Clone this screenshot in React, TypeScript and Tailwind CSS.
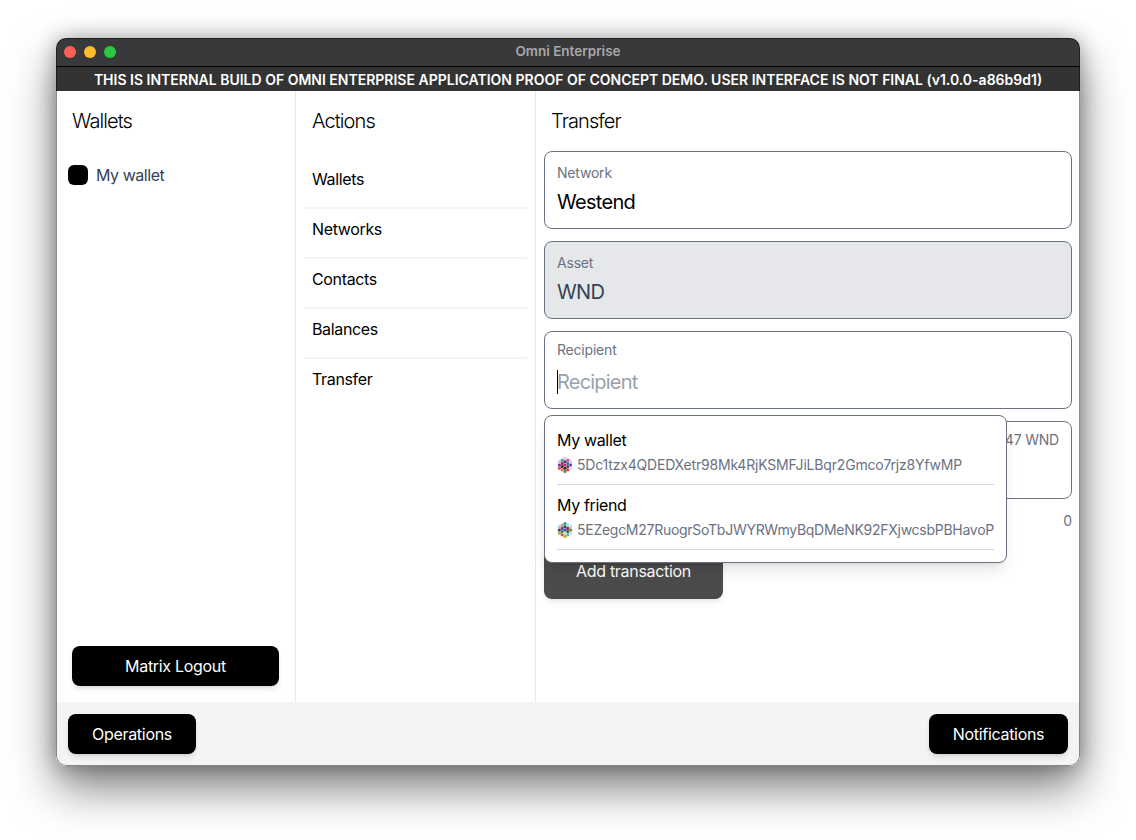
import React from "react";

const columns: number[][] = [
  [4.8, 8, 11.2],
  [3.2, 6.4, 9.6, 12.8],
  [1.6, 4.8, 8, 11.2, 14.4],
  [3.2, 6.4, 9.6, 12.8],
  [4.8, 8, 11.2],
];
const xs = [2.4, 5.2, 8, 10.8, 13.6];
const dots: [number, number][] = columns.flatMap((col, i) => col.map((y) => [xs[i], y] as [number, number]));

function Identicon({ colors }: { colors: string[] }) {
  return (
    <svg width="16" height="16" viewBox="0 0 16 16" className="shrink-0">
      <circle cx="8" cy="8" r="8" fill="#f3eff3" />
      {dots.map(([x, y], i) => (
        <circle key={i} cx={x} cy={y} r="1.55" fill={colors[i]} />
      ))}
    </svg>
  );
}

const c1 = ["#e9b3d8", "#7a2f7a", "#d94a4a", "#2aa0a0", "#a02a6a", "#30303a", "#e07a30", "#e8c0e0", "#40307a", "#c0206a", "#25252f", "#2aa05a", "#e040a0", "#1e8a8a", "#8a2f4f", "#d93a3a", "#e8c0e0", "#5a3fc0", "#e8d0e8"];
const c2 = ["#8fd0c0", "#23405f", "#a8b22b", "#d0a060", "#7a3a8a", "#2a8f5f", "#c0508a", "#20a0b0", "#3a3a50", "#4a3fb0", "#e0e0a0", "#e0a030", "#a0e0e0", "#7a2f50", "#3a6a30", "#30c0c0", "#c0d0e0", "#5a8a30", "#e8d0e8"];

function Field({ label, children, className = "" }: { label: React.ReactNode; children?: React.ReactNode; className?: string }) {
  return (
    <div className={`h-[78px] rounded-lg border border-gray-500 px-3 ${className}`}>
      {label}
      {children}
    </div>
  );
}

function Btn({ children, className = "" }: { children: React.ReactNode; className?: string }) {
  return (
    <button className={`rounded-lg bg-black text-white text-base tracking-[-0.3px] shadow-md ${className}`}>{children}</button>
  );
}

export default function App() {
  return (
    <div className="w-[1136px] h-[840px] bg-white overflow-hidden pl-[56px] pt-[38px] font-['Inter','Liberation_Sans',sans-serif]">
      <div className="relative w-[1024px] h-[728px] rounded-[10px] overflow-hidden flex flex-col bg-white shadow-[0_22px_45px_rgba(0,0,0,0.5),0_0_20px_rgba(0,0,0,0.3)]">
        <div className="h-[29px] bg-[#38393b] border-b border-black flex items-center relative shrink-0">
          <div className="flex gap-2 pl-[8px]">
            <span className="w-3 h-3 rounded-full bg-[#ff5f57]" />
            <span className="w-3 h-3 rounded-full bg-[#febc2e]" />
            <span className="w-3 h-3 rounded-full bg-[#28c840]" />
          </div>
          <span className="absolute inset-0 flex items-center justify-center pb-[2px] text-[13.5px] font-semibold text-[#a8a8a8]">Omni Enterprise</span>
        </div>
        <div className="h-[24px] bg-[#333333] text-white text-[14px] font-semibold flex items-center justify-center shrink-0 whitespace-nowrap">
          THIS IS INTERNAL BUILD OF OMNI ENTERPRISE APPLICATION PROOF OF CONCEPT DEMO. USER INTERFACE IS NOT FINAL (v1.0.0-a86b9d1)
        </div>
        <div className="flex flex-1 min-h-0">
          <div className="w-[240px] border-r border-gray-200 flex flex-col px-4 pb-4 shrink-0">
            <h2 className="text-xl font-light tracking-[-0.9px] text-black h-[60px] flex items-center">Wallets</h2>
            <div className="flex items-center gap-2 mt-[4px] -ml-1 h-10">
              <span className="w-5 h-5 rounded-md bg-black" />
              <span className="text-base tracking-[-0.45px] text-gray-700">My wallet</span>
            </div>
            <Btn className="mt-auto h-10 w-full">Matrix Logout</Btn>
          </div>
          <div className="w-[240px] border-r border-gray-200 px-2 shrink-0">
            <h2 className="text-xl font-light tracking-[-0.9px] text-black h-[60px] flex items-center pl-2">Actions</h2>
            <div className="mt-2">
              {["Wallets", "Networks", "Contacts", "Balances", "Transfer"].map((a, i) => (
                <div key={a} className={`h-[50px] flex items-center px-2 pb-2 border-b-2 text-base tracking-[-0.35px] text-black ${i < 4 ? "border-gray-100" : "border-transparent"}`}>
                  {a}
                </div>
              ))}
            </div>
          </div>
          <div className="flex-1 px-2 relative">
            <h2 className="text-xl font-light tracking-[-0.9px] text-black h-[60px] flex items-center pl-[7px]">Transfer</h2>
            <div className="flex flex-col gap-3">
              <Field className="pt-[11px]" label={<div className="text-sm tracking-[-0.2px] text-gray-500">Network</div>}>
                <div className="text-xl tracking-[-0.7px] text-black mt-[5px]">Westend</div>
              </Field>
              <Field className="bg-gray-200 pt-[11px]" label={<div className="text-sm tracking-[-0.2px] text-gray-500">Asset</div>}>
                <div className="text-xl tracking-[-0.7px] text-gray-700 mt-[5px]">WND</div>
              </Field>
              <Field className="pt-[8px]" label={<div className="text-sm tracking-[-0.2px] text-gray-500">Recipient</div>}>
                <div className="relative text-xl tracking-[-0.8px] text-gray-400 leading-[22px] mt-[11px]">
                  Recipient
                  <span className="absolute left-0 -top-px w-px h-6 bg-black" />
                </div>
              </Field>
              <Field className="pt-[8px]" label={<div className="text-sm tracking-[-0.2px] text-gray-500 flex justify-between"><span>Amount</span><span>Balance: 0.47 WND</span></div>} />
            </div>
            <div className="text-sm text-gray-500 text-right mt-3 h-5">0</div>
            <Btn className="h-14 w-[179px] mt-3 opacity-70">Add transaction</Btn>
            <div className="absolute left-2 top-[324px] w-[463px] h-[148px] bg-white rounded-lg border border-gray-500 shadow-lg px-3 pt-[12px]">
              {[
                { name: "My wallet", addr: "5Dc1tzx4QDEDXetr98Mk4RjKSMFJiLBqr2Gmco7rjz8YfwMP", c: c1, t: "tracking-[-0.19px]" },
                { name: "My friend", addr: "5EZegcM27RuogrSoTbJWYRWmyBqDMeNK92FXjwcsbPBHavoP", c: c2, t: "tracking-[-0.27px]" },
              ].map((o) => (
                <div key={o.name} className="h-[57px] mb-2 border-b border-gray-300">
                  <div className="text-base tracking-[-0.35px] text-black leading-6">{o.name}</div>
                  <div className="flex items-center gap-1 mt-[3px] text-sm text-gray-500 whitespace-nowrap">
                    <Identicon colors={o.c} />
                    <span className={o.t}>{o.addr}</span>
                  </div>
                </div>
              ))}
            </div>
          </div>
        </div>
        <div className="h-[64px] bg-gray-100 flex items-center justify-between px-3 shrink-0">
          <Btn className="h-10 w-[128px]">Operations</Btn>
          <Btn className="h-10 w-[139px]">Notifications</Btn>
        </div>
        <div className="absolute inset-0 rounded-[10px] ring-1 ring-inset ring-black/45 pointer-events-none" />
      </div>
    </div>
  );
}
